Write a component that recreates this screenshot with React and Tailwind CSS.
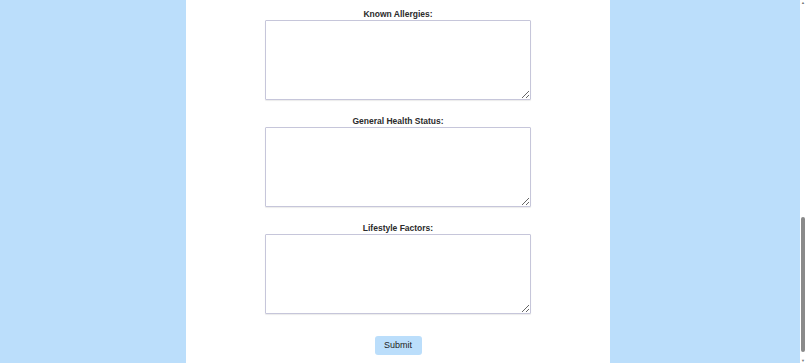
// App.jsx
// Scrolled-to-bottom health form: three labelled textareas + submit button
// on a white center column over a light blue page.

const fields = ['Known Allergies:', 'General Health Status:', 'Lifestyle Factors:'];

function Field({ label }) {
  return (
    <div className="flex flex-col items-center mb-[15px]">
      <label className="block h-[12px] leading-[12px] text-[8.5px] font-bold text-[#2b2b2b]">
        {label}
      </label>
      <textarea
        className="w-[266px] h-[80px] bg-white border border-[#c6c6da] rounded-[1px] shadow-[0_1px_1px_rgba(0,0,0,0.08)] outline-none"
      />
    </div>
  );
}

export default function App() {
  return (
    <div
      className="w-[806px] h-[363px] flex overflow-hidden bg-[#bbdefb]"
      style={{ fontFamily: '"Liberation Sans", Arial, sans-serif' }}
    >
      <div className="w-[186px] shrink-0" />

      {/* center form column */}
      <div className="w-[424px] shrink-0 bg-white pt-[8px] flex flex-col items-center">
        {fields.map((f) => (
          <Field key={f} label={f} />
        ))}
        <button className="mt-[7px] w-[47px] h-[19px] rounded-[3px] bg-[#bbdefb] text-[9px] leading-[19px] text-[#222]">
          Submit
        </button>
      </div>

      <div className="flex-1" />

      {/* fake page scrollbar */}
      <div className="w-[6px] shrink-0 bg-white relative flex flex-col items-center">
        <div className="text-[4px] leading-[4px] text-[#777] mt-px">▲</div>
        <div className="absolute left-[1px] top-[217px] w-[4px] h-[135px] rounded-[2px] bg-[#8a8a8a]" />
        <div className="absolute bottom-0 text-[4px] leading-[4px] text-[#777]">▼</div>
      </div>
    </div>
  );
}
